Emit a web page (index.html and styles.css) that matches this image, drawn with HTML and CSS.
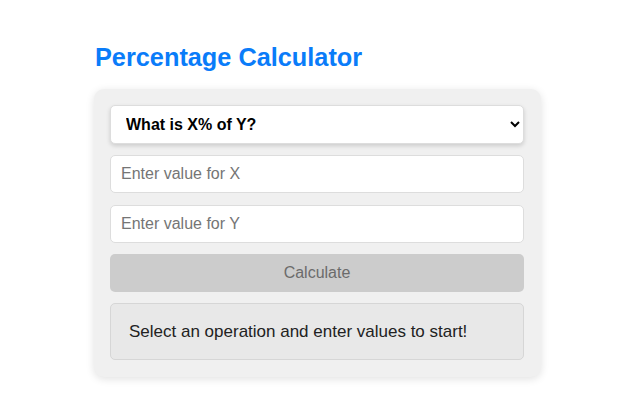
FILE: index.html
```html
<!DOCTYPE html>
<html lang="en">
<head>
<meta charset="utf-8">
<title>Percentage Calculator</title>
<link rel="stylesheet" href="styles.css">
</head>
<body>
<div class="container">
  <h1 class="title">Percentage Calculator</h1>
  <div class="card">
    <select class="op">
      <option>What is X% of Y?</option>
      <option>X is what % of Y?</option>
      <option>Percentage change from X to Y</option>
    </select>
    <input class="field field-x" type="text" placeholder="Enter value for X">
    <input class="field field-y" type="text" placeholder="Enter value for Y">
    <button class="calc" disabled>Calculate</button>
    <div class="result">Select an operation and enter values to start!</div>
  </div>
</div>
</body>
</html>
```
FILE: styles.css
```css
html, body {
  margin: 0;
  padding: 0;
  background: #ffffff;
  font-family: "Liberation Sans", Arial, sans-serif;
}
body {
  min-height: 400px;
}
.container {
  width: 447px;
  margin-left: 94px;
  padding-top: 26px;
  padding-bottom: 20px;
}
.title {
  font-size: 25.3px;
  font-weight: bold;
  color: #0a7cf9;
  margin: 17px 0 17px 1px;
}
.card {
  background: #f0f0f0;
  border-radius: 10px;
  box-shadow: 0 2px 8px rgba(0, 0, 0, 0.12);
  padding: 16px 17px 17px 16px;
  display: flex;
  flex-direction: column;
}
.op {
  font-family: "Liberation Sans", Arial, sans-serif;
  font-size: 16px;
  font-weight: bold;
  color: #000;
  height: 39px;
  padding: 0 10px 0 11px;
  border: 1px solid #ddd;
  border-radius: 5px;
  background: #fff;
  box-shadow: 0 2px 4px rgba(0, 0, 0, 0.15);
}
.field {
  font-family: "Liberation Sans", Arial, sans-serif;
  font-size: 16px;
  height: 38px;
  box-sizing: border-box;
  padding: 0 10px;
  border: 1px solid #ddd;
  border-radius: 5px;
  background: #fff;
  color: #000;
  margin-top: 11px;
}
.field-y {
  margin-top: 12px;
}
.field::placeholder {
  color: #757575;
}
.calc {
  font-family: "Liberation Sans", Arial, sans-serif;
  font-size: 16px;
  height: 38px;
  margin-top: 11px;
  border: none;
  border-radius: 5px;
  background: #cccccc;
  color: #6b6b6b;
}
.result {
  margin-top: 11px;
  background: #e8e8e8;
  border: 1px solid #d6d6d6;
  border-radius: 5px;
  padding: 17px 18px;
  font-size: 17px;
  line-height: 21px;
  color: #222;
}
```
